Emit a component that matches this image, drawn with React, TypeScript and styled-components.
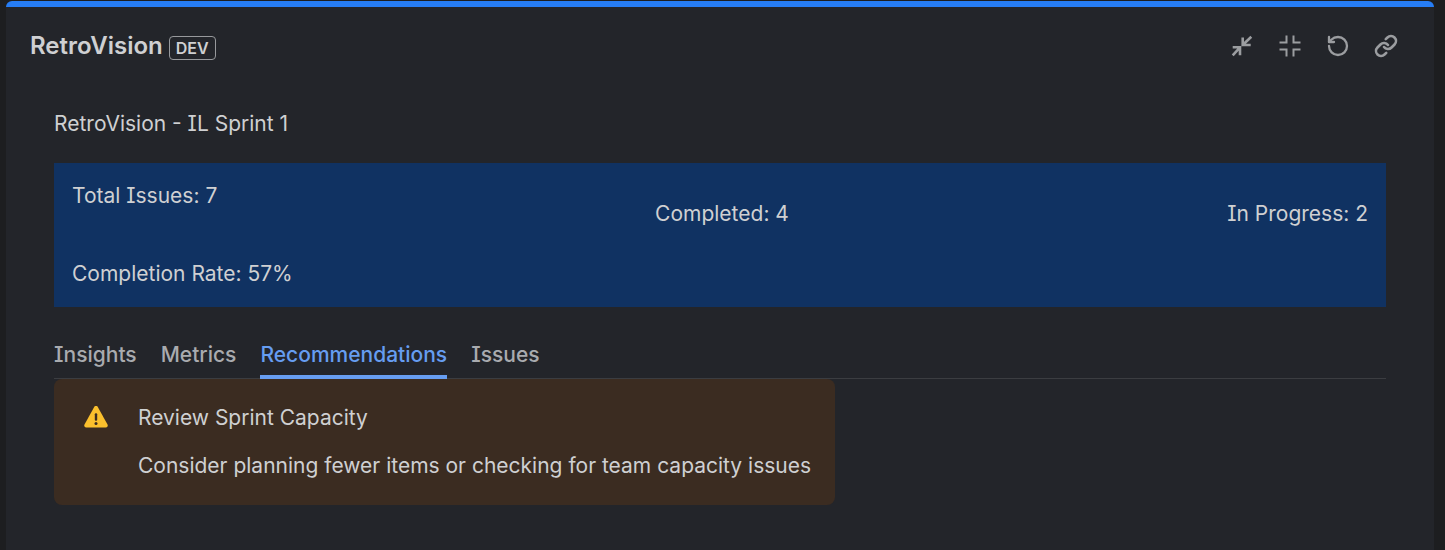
import { ReactElement } from 'react';
import styled, { createGlobalStyle } from 'styled-components';

const GlobalStyle = createGlobalStyle`
  html, body {
    margin: 0;
    padding: 0;
    height: 100%;
    background: #1d1e20;
  }

  body {
    font-family: Inter, "Liberation Sans", sans-serif;
    font-feature-settings: "cv08";
    overflow: hidden;
  }
`;

const Page = styled.div`
  height: 550px;
  padding: 1px 11px 0 6px;
  box-sizing: border-box;
`;

const Card = styled.section`
  height: 549px;
  box-sizing: border-box;
  background: #23252a;
  border-top: 6px solid #267df5;
  border-radius: 6px 6px 0 0;
`;

const CardHeader = styled.header`
  display: flex;
  align-items: center;
  justify-content: space-between;
  height: 78px;
  padding: 0 36px 0 24px;
  box-sizing: border-box;
`;

const TitleRow = styled.div`
  display: flex;
  align-items: center;
  gap: 6px;
`;

const Title = styled.h1`
  margin: 0;
  font-size: 24px;
  line-height: 28px;
  font-weight: 600;
  color: #cfd0d2;
`;

const DevBadge = styled.span`
  display: block;
  padding: 0 6px;
  height: 24px;
  margin-top: 3px;
  box-sizing: border-box;
  border: 1px solid #97999c;
  border-radius: 4px;
  font-size: 16px;
  line-height: 22px;
  font-weight: 600;
  color: #cfd0d2;
`;

const Actions = styled.div`
  display: flex;
  align-items: center;
  gap: 24px;
`;

const ActionIcon = styled.svg<{ weight?: number }>`
  display: block;
  width: 24px;
  height: 24px;
  fill: none;
  stroke: #9b9da0;
  stroke-width: ${props => props.weight ?? 2.2};
  stroke-linecap: round;
  stroke-linejoin: round;
`;

const SquareIcon = styled(ActionIcon)`
  stroke-linecap: butt;
  stroke-linejoin: miter;
`;

const Content = styled.div`
  padding: 27px 48px 0;
`;

const SprintTitle = styled.h2`
  margin: 0 0 27px;
  font-size: 21px;
  line-height: 24px;
  font-weight: 400;
  color: #cfd0d2;
`;

const Summary = styled.div`
  display: grid;
  grid-template-columns: repeat(3, 1fr);
  height: 144px;
  box-sizing: border-box;
  padding: 9px 18px 7px;
  background: #103262;
  font-size: 21px;
  line-height: 48px;
  color: #cfd0d2;
`;

const StatStack = styled.div`
  display: flex;
  flex-direction: column;
  gap: 30px;
`;

const Stat = styled.div<{ align: 'center' | 'right' }>`
  padding-top: 18px;
  padding-left: ${props => props.align === 'center' ? '4px' : '0'};
  text-align: ${props => props.align};
`;

const TabBar = styled.nav`
  display: flex;
  gap: 24px;
  margin-top: 26px;
  height: 46px;
  box-sizing: border-box;
  border-bottom: 1px solid #3b3d41;
`;

const Tab = styled.div<{ active?: boolean }>`
  height: 46px;
  box-sizing: border-box;
  font-size: 21px;
  line-height: 44px;
  font-weight: 500;
  color: ${props => props.active ? '#669df1' : '#a9abaf'};
  border-bottom: 4px solid ${props => props.active ? '#669df1' : 'transparent'};
`;

const Notice = styled.div`
  display: flex;
  width: 781px;
  height: 126px;
  box-sizing: border-box;
  padding: 27px 0 0 30px;
  background: #3b2c21;
  border-radius: 8px;
`;

const NoticeIcon = styled.svg`
  flex-shrink: 0;
  display: block;
  width: 24px;
  height: 24px;
  margin-right: 30px;
`;

const NoticeBody = styled.div`
  display: flex;
  flex-direction: column;
  gap: 24px;
  font-size: 21px;
  line-height: 24px;
  color: #cfd0d2;
`;

/**
 * Retrospective panel with sprint summary and recommendations
 */
export default function App(): ReactElement {
  return (
    <Page>
      <GlobalStyle />
      <Card>
        <CardHeader>
          <TitleRow>
            <Title>RetroVision</Title>
            <DevBadge>DEV</DevBadge>
          </TitleRow>
          <Actions>
            <SquareIcon viewBox="0 0 24 24" weight={2.6}>
              <path d="M12.7 3.5V11H20.7M12.7 11 21.3 2.7M2.7 13.3H10V21.3M10 13.3 2.7 21.3" />
            </SquareIcon>
            <SquareIcon viewBox="0 0 24 24" weight={2}>
              <path d="M1.5 8.5H8.5V1.5M15.5 1.5V8.5H22.5M22.5 15.5H15.5V22.5M8.5 22.5V15.5H1.5" />
            </SquareIcon>
            <ActionIcon viewBox="0 0 24 24" weight={2.3}>
              <path d="M3 12a9 9 0 1 0 9-9 9.75 9.75 0 0 0-6.74 2.74L3 8" />
              <path d="M3 3v5h5" />
            </ActionIcon>
            <ActionIcon viewBox="0 0 24 24" weight={2.6}>
              <path d="M10 13a5 5 0 0 0 7.54.54l3-3a5 5 0 0 0-7.07-7.07l-1.72 1.71" />
              <path d="M14 11a5 5 0 0 0-7.54-.54l-3 3a5 5 0 0 0 7.07 7.07l1.71-1.71" />
            </ActionIcon>
          </Actions>
        </CardHeader>
        <Content>
          <SprintTitle>RetroVision - IL Sprint 1</SprintTitle>
          <Summary>
            <StatStack>
              <span>Total Issues: 7</span>
              <span>Completion Rate: 57%</span>
            </StatStack>
            <Stat align="center">Completed: 4</Stat>
            <Stat align="right">In Progress: 2</Stat>
          </Summary>
          <TabBar>
            <Tab>Insights</Tab>
            <Tab>Metrics</Tab>
            <Tab active>Recommendations</Tab>
            <Tab>Issues</Tab>
          </TabBar>
          <Notice>
            <NoticeIcon viewBox="0 0 24 24">
              <path
                fill="#fbc02d"
                d="M10.2.9a2.1 2.1 0 0 1 3.6 0l9.7 17.6a2.1 2.1 0 0 1-1.8 3.1H2.3a2.1 2.1 0 0 1-1.8-3.1z"
              />
              <rect x="10.8" y="7.2" width="2.4" height="7.6" rx="1.1" fill="#3b2c21" />
              <circle cx="12" cy="17.5" r="1.5" fill="#3b2c21" />
            </NoticeIcon>
            <NoticeBody>
              <span>Review Sprint Capacity</span>
              <span>Consider planning fewer items or checking for team capacity issues</span>
            </NoticeBody>
          </Notice>
        </Content>
      </Card>
    </Page>
  );
}
